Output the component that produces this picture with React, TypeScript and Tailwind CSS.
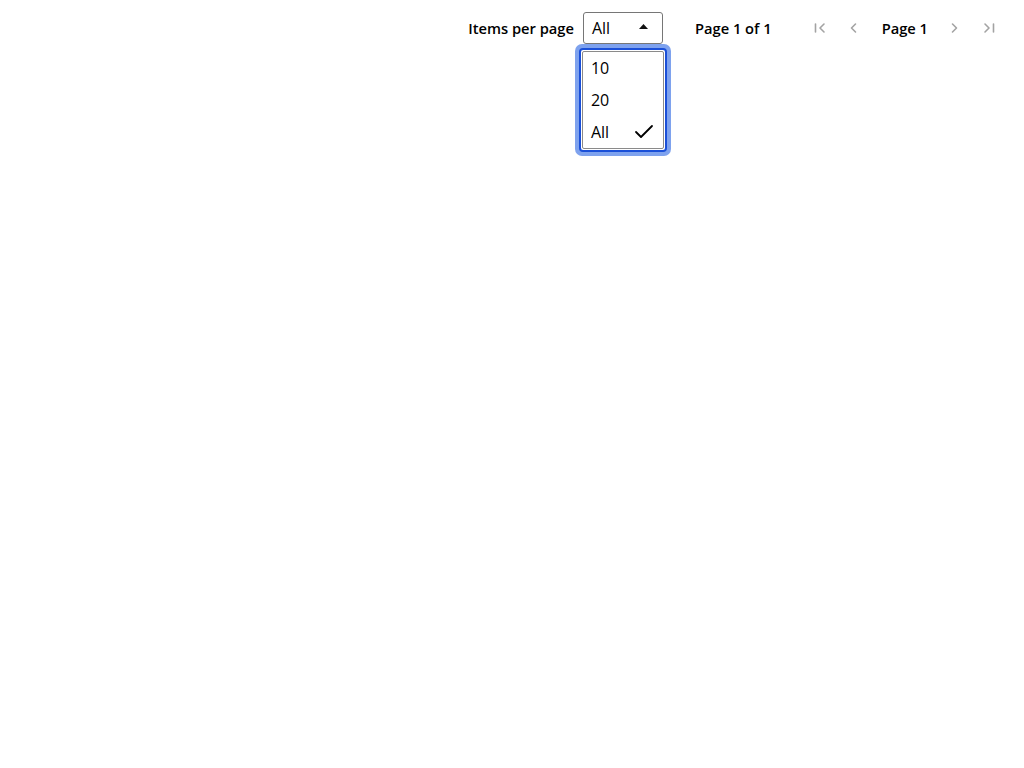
import React from 'react';
import { Check } from 'lucide-react';

const font = { fontFamily: '"Open Sans", "Liberation Sans", sans-serif' };

function FirstIcon() {
    return (
        <svg width="16" height="16" viewBox="0 0 16 16" fill="none" stroke="currentColor" strokeWidth="1.6" strokeLinecap="round" strokeLinejoin="round">
            <path d="M2.5 4v8" />
            <path d="M11 4 7 8l4 4" />
        </svg>
    );
}

function PrevIcon() {
    return (
        <svg width="16" height="16" viewBox="0 0 16 16" fill="none" stroke="currentColor" strokeWidth="1.6" strokeLinecap="round" strokeLinejoin="round">
            <path d="M10.5 4 6.5 8l4 4" />
        </svg>
    );
}

function NextIcon() {
    return (
        <svg width="16" height="16" viewBox="0 0 16 16" fill="none" stroke="currentColor" strokeWidth="1.6" strokeLinecap="round" strokeLinejoin="round">
            <path d="M5.5 4l4 4-4 4" />
        </svg>
    );
}

function LastIcon() {
    return (
        <svg width="16" height="16" viewBox="0 0 16 16" fill="none" stroke="currentColor" strokeWidth="1.6" strokeLinecap="round" strokeLinejoin="round">
            <path d="M5 4l4 4-4 4" />
            <path d="M13.5 4v8" />
        </svg>
    );
}

const options = ['10', '20', 'All'];

export default function App() {
    const selected = 'All';

    return (
        <div className="min-h-screen bg-white text-black" style={font}>
            <div className="flex h-14 items-center justify-end pr-5">
                {/* Items per page */}
                <span className="text-[14.7px] font-semibold">Items per page</span>
                <div className="relative ml-[9px]">
                    <button className="flex h-8 w-20 items-center justify-between rounded-[3px] border border-[#767676] bg-white pl-2 pr-[14px] text-base text-black">
                        <span>{selected}</span>
                        <svg width="9" height="5" viewBox="0 0 9 5" className="mb-[3px]">
                            <path d="M0 5 4.5 0 9 5z" fill="#111" />
                        </svg>
                    </button>

                    {/* Open listbox */}
                    <div className="absolute left-[-8px] top-8 z-10 w-[96px] rounded-[7px] bg-[#7ea2ee] p-1">
                        <div className="rounded-[4px] border-2 border-[#1a4fd8] bg-white p-[1px]">
                            <ul className="rounded-[2px] border border-[#8a8a8a] bg-white">
                                {options.map((opt) => (
                                    <li key={opt} className="flex h-8 items-center justify-between pl-2 pr-[7px] text-base text-black">
                                        <span>{opt}</span>
                                        {opt === selected && <Check size={24} strokeWidth={1.8} className="text-black" />}
                                    </li>
                                ))}
                            </ul>
                        </div>
                    </div>
                </div>

                <span className="ml-8 text-[14.7px] font-semibold">Page 1 of 1</span>

                {/* Page nav */}
                <div className="ml-[33px] flex items-center">
                    <button disabled className="flex h-8 w-8 items-center justify-center text-[#a3a3a3]">
                        <FirstIcon />
                    </button>
                    <button disabled className="flex h-8 w-8 items-center justify-center text-[#a3a3a3]">
                        <PrevIcon />
                    </button>
                    <span className="pl-[13px] pr-[11px] text-[14.7px] font-semibold">Page 1</span>
                    <button disabled className="flex h-8 w-8 items-center justify-center text-[#a3a3a3]">
                        <NextIcon />
                    </button>
                    <button disabled className="ml-px flex h-8 w-8 items-center justify-center text-[#a3a3a3]">
                        <LastIcon />
                    </button>
                </div>
            </div>
        </div>
    );
}
